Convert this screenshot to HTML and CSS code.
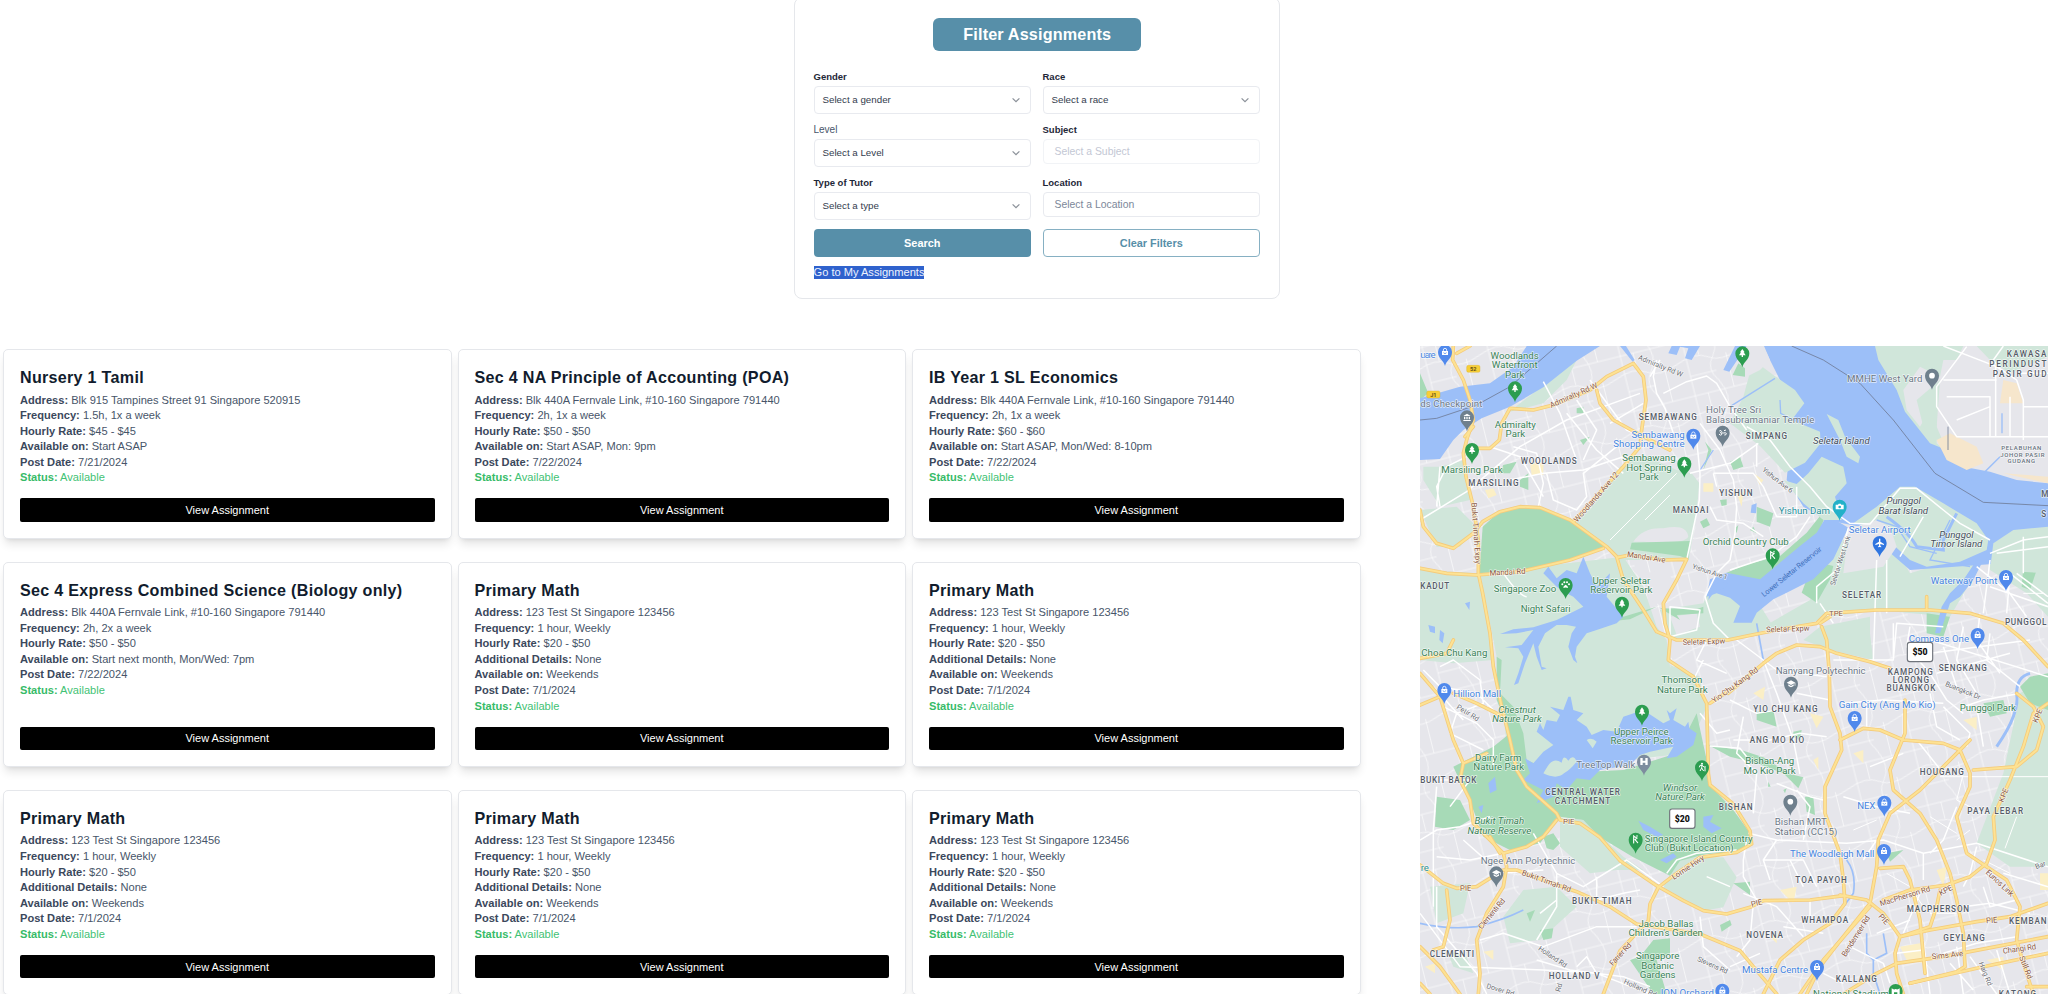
FILE: index.html
```html
<!DOCTYPE html>
<html lang="en">
<head>
<meta charset="utf-8">
<title>Assignments</title>
<link rel="stylesheet" href="styles.css">
</head>
<body>
<svg class="defs" width="0" height="0" aria-hidden="true"><symbol id="chev" viewBox="0 0 10 10"><path d="M1.6 3.3 5 6.7 8.4 3.3" fill="none" stroke="#8b9199" stroke-width="1.2"/></symbol></svg>
<section class="filter">
  <h1 class="filter-title">Filter Assignments</h1>
  <form class="fields">
    <div class="field"><label>Gender</label><div class="select"><span>Select a gender</span><svg class="chev"><use href="#chev"/></svg></div></div>
    <div class="field"><label>Race</label><div class="select"><span>Select a race</span><svg class="chev"><use href="#chev"/></svg></div></div>
    <div class="field"><label class="plain">Level</label><div class="select"><span>Select a Level</span><svg class="chev"><use href="#chev"/></svg></div></div>
    <div class="field"><label>Subject</label><div class="input disabled">Select a Subject</div></div>
    <div class="field"><label>Type of Tutor</label><div class="select"><span>Select a type</span><svg class="chev"><use href="#chev"/></svg></div></div>
    <div class="field"><label>Location</label><div class="input">Select a Location</div></div>
    <button type="button" class="btn">Search</button>
    <button type="button" class="btn outline">Clear Filters</button>
  </form>
  <a class="mine">Go to My Assignments</a>
</section>
<main class="content">
<div class="cards">
  <article class="card"><h2>Nursery 1 Tamil</h2><p><b>Address:</b> Blk 915 Tampines Street 91 Singapore 520915</p><p><b>Frequency:</b> 1.5h, 1x a week</p><p><b>Hourly Rate:</b> $45 - $45</p><p><b>Available on:</b> Start ASAP</p><p><b>Post Date:</b> 7/21/2024</p><p class="ok"><b>Status:</b> Available</p><button class="view">View Assignment</button></article>
  <article class="card"><h2>Sec 4 NA Principle of Accounting (POA)</h2><p><b>Address:</b> Blk 440A Fernvale Link, #10-160 Singapore 791440</p><p><b>Frequency:</b> 2h, 1x a week</p><p><b>Hourly Rate:</b> $50 - $50</p><p><b>Available on:</b> Start ASAP, Mon: 9pm</p><p><b>Post Date:</b> 7/22/2024</p><p class="ok"><b>Status:</b> Available</p><button class="view">View Assignment</button></article>
  <article class="card"><h2>IB Year 1 SL Economics</h2><p><b>Address:</b> Blk 440A Fernvale Link, #10-160 Singapore 791440</p><p><b>Frequency:</b> 2h, 1x a week</p><p><b>Hourly Rate:</b> $60 - $60</p><p><b>Available on:</b> Start ASAP, Mon/Wed: 8-10pm</p><p><b>Post Date:</b> 7/22/2024</p><p class="ok"><b>Status:</b> Available</p><button class="view">View Assignment</button></article>
  <article class="card"><h2>Sec 4 Express Combined Science (Biology only)</h2><p><b>Address:</b> Blk 440A Fernvale Link, #10-160 Singapore 791440</p><p><b>Frequency:</b> 2h, 2x a week</p><p><b>Hourly Rate:</b> $50 - $50</p><p><b>Available on:</b> Start next month, Mon/Wed: 7pm</p><p><b>Post Date:</b> 7/22/2024</p><p class="ok"><b>Status:</b> Available</p><button class="view">View Assignment</button></article>
  <article class="card"><h2>Primary Math</h2><p><b>Address:</b> 123 Test St Singapore 123456</p><p><b>Frequency:</b> 1 hour, Weekly</p><p><b>Hourly Rate:</b> $20 - $50</p><p><b>Additional Details:</b> None</p><p><b>Available on:</b> Weekends</p><p><b>Post Date:</b> 7/1/2024</p><p class="ok"><b>Status:</b> Available</p><button class="view">View Assignment</button></article>
  <article class="card"><h2>Primary Math</h2><p><b>Address:</b> 123 Test St Singapore 123456</p><p><b>Frequency:</b> 1 hour, Weekly</p><p><b>Hourly Rate:</b> $20 - $50</p><p><b>Additional Details:</b> None</p><p><b>Available on:</b> Weekends</p><p><b>Post Date:</b> 7/1/2024</p><p class="ok"><b>Status:</b> Available</p><button class="view">View Assignment</button></article>
  <article class="card"><h2>Primary Math</h2><p><b>Address:</b> 123 Test St Singapore 123456</p><p><b>Frequency:</b> 1 hour, Weekly</p><p><b>Hourly Rate:</b> $20 - $50</p><p><b>Additional Details:</b> None</p><p><b>Available on:</b> Weekends</p><p><b>Post Date:</b> 7/1/2024</p><p class="ok"><b>Status:</b> Available</p><button class="view">View Assignment</button></article>
  <article class="card"><h2>Primary Math</h2><p><b>Address:</b> 123 Test St Singapore 123456</p><p><b>Frequency:</b> 1 hour, Weekly</p><p><b>Hourly Rate:</b> $20 - $50</p><p><b>Additional Details:</b> None</p><p><b>Available on:</b> Weekends</p><p><b>Post Date:</b> 7/1/2024</p><p class="ok"><b>Status:</b> Available</p><button class="view">View Assignment</button></article>
  <article class="card"><h2>Primary Math</h2><p><b>Address:</b> 123 Test St Singapore 123456</p><p><b>Frequency:</b> 1 hour, Weekly</p><p><b>Hourly Rate:</b> $20 - $50</p><p><b>Additional Details:</b> None</p><p><b>Available on:</b> Weekends</p><p><b>Post Date:</b> 7/1/2024</p><p class="ok"><b>Status:</b> Available</p><button class="view">View Assignment</button></article>
</div>
<svg class="map" viewBox="30 18 1884 1944">
<defs>
  <pattern id="streets" width="190" height="170" patternUnits="userSpaceOnUse" patternTransform="rotate(-14)"><path d="M0 30H190M0 95Q60 70 95 95T190 95M30 0V170M110 0Q140 60 110 95T110 170M30 140H110M150 95V170M70 30V82M150 30V0" fill="none" stroke="#fff" stroke-width="2.6" opacity=".7"/></pattern>
  <path id="drop" d="M0 42C-3 26-21 20-21 0A21 21 0 1 1 21 0C21 20 3 26 0 42Z"/>
  <g id="tree"><use href="#drop" fill="#2c9d50"/><path d="M0-13-7-3H-4L-10 6H-2V11H2V6H10L4-3H7Z" fill="#fff"/></g>
  <g id="bag"><use href="#drop" fill="#5089ec"/><path d="M-9-3H9V9H-9Z" fill="#fff"/><path d="M-5-3V-6A5 5 0 0 1 5-6V-3" fill="none" stroke="#fff" stroke-width="2.4"/><path d="M-4 1A4 4 0 0 0 4 1" fill="none" stroke="#5089ec" stroke-width="2"/></g>
  <g id="dot"><use href="#drop" fill="#6f808d"/><circle r="8.5" fill="#fff"/></g>
  <g id="school"><use href="#drop" fill="#6f808d"/><path d="M-13-3 0-10 13-3 0 4ZM-8 2 0 7 8 2V7L0 11-8 7ZM11-3H13V6H11Z" fill="#fff"/></g>
  <g id="golf"><use href="#drop" fill="#2c9d50"/><path d="M-6-12V10M-6-10 4-5-2 0 6 9M4-12V-10" fill="none" stroke="#fff" stroke-width="3.4" stroke-linecap="round"/></g>
</defs>
<rect x="30" y="18" width="1884" height="1944" fill="#e6e6eb"/>
<rect x="30" y="18" width="1884" height="1944" fill="url(#streets)"/>

<g class="park">
  <path d="M490 550 630 380 700 345 800 390 845 400 868 430 860 520 836 660H620L590 620Z"/>
  <path d="M90 380 165 360 180 480 90 500 40 420V380ZM270 240 330 190 460 90 500 60 470 120 400 190 300 215ZM30 690 205 700 250 960 130 970 30 960ZM30 510 140 500 200 560 150 620 80 620Z"/>
  <path d="M210 700 640 650 700 740 740 860 770 900 780 980 880 1060 890 1100 830 1240 300 1300 260 950Z"/>
  <path d="M750 810 880 790 900 740 960 720 1040 780 1090 860 1000 895 860 895 780 895Z"/>
  <path d="M780 975 870 1010 880 1080 820 1080Z"/>
  <path d="M450 1432 520 1440 640 1550 700 1590 620 1590 540 1600 450 1520ZM340 1650 440 1640 500 1700 390 1800 300 1810 280 1730Z"/>
  <path d="M810 1552 940 1552 980 1612 940 1702 880 1712 760 1642Z"/>
  <path d="M60 1640 180 1630 160 1720 80 1750ZM110 1830 170 1850 190 1900 130 1880Z"/>
  <path d="M1060 860 1200 780 1240 660 1300 600 1420 560 1500 700 1700 640 1720 660 1620 830 1400 810 1260 830 1130 870Z"/>
  <path d="M1230 860 1380 830 1380 880 1390 960 1260 930 1180 900Z"/>
  <path d="M1720 600 1914 560V830L1850 760 1740 690Z"/>
  <path d="M1830 1060 1914 1010V1580H1800L1700 1510 1780 1300Z"/>
</g>
<path d="M670 605Q700 560 760 565 830 550 835 590 820 615 700 605ZM700 700 770 690 800 740 760 800 720 780ZM780 830 860 820 870 860 800 885Z" fill="#e6e6eb"/>
<g class="green">
  <path d="M208 700 218 560 260 522 320 503 390 503 480 540 590 620 480 660 330 690Z"/>
  <path d="M260 950 275 960 270 1060 310 1100 340 1180 350 1260 440 1300 640 1290 800 1240 860 1120 890 1260 897 1332 970 1410 1015 1472 1020 1512 970 1537 890 1542 810 1562 780 1607 670 1552 570 1492 520 1440 450 1430 390 1510 300 1530 220 1490 190 1410 130 1280 250 1220 300 1180 260 1080Z"/>
  <path d="M80 1370 150 1380 180 1440 130 1470 75 1460ZM30 100 55 160 30 180ZM665 608 840 603 835 658 810 648 660 628Z"/>
  <path d="M730 1800 780 1795 780 1840 740 1860 770 1962H730L660 1860 690 1850Z"/>
  <path d="M400 1490 430 1480 450 1510 430 1530 410 1525ZM390 1770 430 1765 425 1795 400 1800ZM350 1720 375 1710 360 1745ZM330 420 355 400 355 450 330 440ZM280 375 320 365 300 400 270 400ZM510 300 540 290 520 315ZM500 205 520 200 520 220 500 220Z"/>
  <path d="M1040 500 1090 520 1080 560 1040 545ZM960 365 990 350 1000 380 970 390ZM885 305 905 330 880 390 895 330ZM930 480 950 478 950 495 935 498ZM870 545 890 535 900 555 880 565ZM985 555 980 580 975 565ZM1030 560 1040 580 1020 570Z"/>
  <path d="M950 698 1010 673 1110 648 1190 578 1230 528 1250 518 1210 618 1130 698 1050 728Z"/>
  <path d="M1190 718 1230 668 1270 678 1260 718 1220 788 1175 758Z"/>
  <path d="M1040 1115 1090 1110 1100 1160 1040 1140ZM1150 1175 1175 1170 1170 1200 1150 1190ZM1550 820 1620 830 1600 890 1550 880ZM1840 680 1880 690 1860 750 1835 740ZM1860 1010 1914 1000V1110L1860 1090 1830 1040ZM1430 1540 1480 1530 1440 1565ZM970 1630 1020 1625 1020 1665ZM1720 1090 1780 1080 1790 1120 1740 1130Z"/>
  <path d="M895 1215 1000 1232 1060 1252 1140 1302 1180 1312 1165 1345 1120 1300 1040 1270 960 1250ZM1185 1370 1210 1370 1215 1425 1190 1415ZM930 1755 960 1740 965 1755 935 1775ZM1120 1350 1130 1345 1125 1360ZM1075 1325 1082 1340 1074 1340Z"/>
  <path d="M750 805 860 808 880 800V820L800 825 810 840ZM590 845 740 800 660 838Z"/>
</g>
<g class="water">
  <path d="M30 175 150 140 240 130 310 80 350 18H570L500 62 400 142 300 200 215 235 160 270 130 300 90 357 30 360ZM630 18 668 65 674 60 648 18ZM785 18 775 40 800 45 810 20 835 25 825 55 845 60 870 18ZM940 90 975 18H1010L958 95Z"/>
  <path d="M1060 18H1914V660L1500 690 1350 560 1250 540 1180 500 1130 420 1150 200 1080 60Z"/>
  <path d="M1290 548 1315 563 1270 658 1210 718 1130 758 1090 778 1040 818 1025 848 970 848 990 798 960 773 920 760 890 770 900 718 950 698 1050 718 1170 618 1220 578 1250 528Z"/>
  <path d="M400 700 415 680 440 715 470 690 500 700 520 650 540 700 560 740 600 700 590 770 640 830 620 850 560 870 530 880 500 920 495 950 502 970 490 960 475 920 485 880 498 860 470 855 440 855 405 880 385 920 395 980 410 985 395 990 380 950 370 910 345 970 325 1030 312 1035 325 1000 340 950 325 925 285 922 335 915 370 870 320 880 270 882 310 868 370 862 440 840 520 800 490 770 470 760 440 740Z"/>
  <path d="M340 1320 360 1300 345 1255 370 1270 400 1235 430 1215 380 1175 390 1150 400 1170 410 1140 440 1145 450 1125 420 1100 460 1110 475 1070 482 1070 490 1110 520 1120 500 1140 530 1160 545 1185 580 1170 620 1175 640 1130 700 1110 760 1150 780 1140 770 1110 780 1120 800 1105 790 1140 825 1160 835 1145 838 1165 860 1180 850 1215 800 1250 770 1255 790 1220 720 1235 690 1245 660 1275 570 1290 540 1320 500 1315 470 1350 440 1330 430 1370 380 1390 400 1350Z"/>
  <path d="M685 1442 720 1460 760 1485 740 1490 700 1470ZM880 1430 910 1425 900 1445 935 1465 905 1480 880 1460ZM750 1560 790 1540 800 1550 770 1570Z"/>
  <path d="M1720 660 1690 720 1650 770 1620 790 1590 880 1575 880 1595 800 1620 760 1660 720 1700 660Z"/>
  <path d="M55 855 75 860 75 880 60 875ZM90 870 103 880 98 910 88 900ZM165 790 180 785 178 810ZM900 740 920 730 955 725 950 740 910 760 895 780ZM235 1330 255 1310 260 1350 240 1360ZM205 1400 220 1395 215 1420ZM1480 18 1500 18 1490 40ZM1025 495 1040 490 1038 520 1022 518Z"/>
</g>
<g class="park">
  <path d="M412 1280Q430 1250 455 1268 460 1240 475 1262 490 1240 500 1265 480 1290 462 1300 440 1320 400 1300ZM530 1200Q545 1190 560 1205L548 1225Z"/>
  <path d="M1000 170 1030 60 1090 105 1155 150 1183 190 1145 240 1230 275 1232 310 1185 368 1125 398 1050 318 960 250Z"/>
  <path d="M1250 222 1285 240 1305 290 1350 350 1345 370 1310 350 1290 300Z"/>
  <path d="M1120 420 1160 432 1195 400 1235 350 1300 380 1310 430 1275 470 1295 540 1240 540 1180 490Z"/>
  <path d="M1395 18H1700V240L1660 370 1610 330 1560 310 1485 215 1460 150 1405 60Z"/>
  <path d="M1330 550 1400 500 1470 440 1515 440 1600 490 1700 550 1735 600 1730 630 1650 665 1550 680 1500 660 1390 560Z"/>
  <path d="M1914 560 1810 570 1750 610 1740 690 1914 700Z"/>
</g>
<path d="M1010 18H1062L1080 60 1050 90 1010 110Z" fill="#e6e6eb"/>
<path d="M1480 150 1530 80 1590 110 1600 60 1640 60 1660 18H1914V430L1820 420 1740 395 1660 380 1580 310 1580 170 1530 260 1490 210Z" fill="#e6e6eb"/>
<path class="park" d="M1590 120 1580 260 1610 330 1540 260 1520 180ZM1700 18H1914V50L1800 100 1740 60Z"/>
<path d="M1580 300 1620 280 1700 320 1720 370 1670 390 1610 360ZM1780 120 1820 130 1840 190 1770 190ZM1780 400 1914 410V430Z" fill="#f6e6cc"/>
<path d="M1340 560 1400 540 1440 560 1460 620 1420 680 1300 700 1310 620Z" fill="#e6e6eb"/>
<path class="green" d="M968 105 985 70 1005 85 1005 110Z"/>
<g fill="none" stroke="#9cbff8" stroke-width="8"><path d="M1400 540 1460 560 1500 620 1580 640M1620 540 1560 660 1680 680M1660 430 1720 400 1770 350M960 200 1095 115M1110 180 1112 220 1150 240M1776 220V280M870 390 910 330" stroke-width="4"/><path d="M1430 530Q1500 580 1520 620L1600 630 1600 600 1640 520M1860 1000Q1820 1010 1820 1060 1830 1120 1760 1220" stroke-width="9"/><path d="M1310 1560Q1340 1600 1330 1660L1300 1700M1370 1780V1840L1390 1860 1430 1840 1420 1780M1390 1860V1900L1410 1962M30 1750Q120 1770 200 1760 280 1740 340 1710M1040 850 1060 960" stroke-width="5"/></g>
<g fill="#fbefc6"><path d="M360 370H400V405H365ZM225 450 250 445 260 465 235 475ZM880 430H910V455H880ZM1030 400 1060 420 1050 435ZM980 460 1000 455 995 500ZM1030 1060 1065 1040 1060 1080ZM1200 1120 1240 1130 1220 1165ZM1330 1240 1360 1230V1270ZM1580 1590 1610 1580 1600 1640ZM1110 1650 1160 1640 1150 1690ZM1470 1820 1530 1810 1540 1870 1490 1860ZM1890 1600H1914V1650H1890ZM1660 1140 1700 1130V1170ZM220 1835 250 1830V1860ZM45 1880 75 1870V1900ZM1210 1260 1225 1250V1290ZM1730 1860 1780 1850V1890ZM1080 1790 1100 1780V1810Z"/></g>

<g class="street">
  <path d="M30 540 170 455 330 320 470 240 690 160M400 125 450 220 500 360M300 420 400 400 520 390 640 350M385 500 400 430 380 340 310 320M520 360 560 270 500 180M600 250 700 190M540 120 650 270 720 300M470 220 560 330 640 400M410 400 430 480 500 510 530 470 520 400 620 320M240 320 330 350 400 470M90 500 80 440 110 380 170 350M740 60 730 110 740 160 765 205 790 280M760 160 830 125 890 108 920 130 960 200 1010 270M860 300 870 400 868 480 830 660M840 400 960 370 1045 310M720 110 750 60M90 380 80 500"/>
  <path d="M870 250 930 330 970 420 980 500 975 580 960 660 920 700 885 770 910 850 960 900M1010 260 1080 300 1140 380 1200 440 1250 500 1320 550 1380 552 1470 445 1520 445 1600 510 1650 550 1740 600M960 690 1080 650 1160 590 1200 530M1315 563 1300 620 1280 690 1220 740 1220 790M910 400 960 400 1030 400 1060 440 1100 530 1160 530V440M910 400 920 440M900 500 920 540 1000 550 1060 590M1040 310 1040 380"/>
  <path d="M1670 20 1580 140V200L1640 290H1914M1600 18 1760 80 1820 120 1840 180V300M1600 120H1760M1610 170H1740V290M1757 80V290M1640 240 1740 200M1800 170V290M1820 100H1914M1840 200H1914M1780 18 1750 60 1780 100M1540 530 1470 650M1740 640 1840 600 1914 590M1760 640 1914 620M1840 590V700"/>
  <path d="M280 700Q330 770 350 770M780 800 870 810 860 870 780 890ZM890 900 860 960 950 1000M90 980 130 960 210 1020 220 1090 140 1120M40 990 90 1040 200 1060 250 1110M100 1100 200 1150 250 1200V1280M140 1120 120 1180 220 1230M70 1040 160 1140M880 960 850 1020M900 1218 990 1225 1010 1250M870 1120 920 1180 960 1170M30 1500 80 1470 150 1460 240 1430M80 1340 70 1470V1700M80 1550 180 1560 280 1540M160 1500 250 1580M370 1480 440 1600 440 1700 380 1800M440 1600 520 1640 650 1560 760 1640M560 1610 560 1680 640 1660 690 1650M770 1600 800 1560 860 1540 980 1530M30 1720 150 1880 400 1890 560 1900 720 1962M210 1800 280 1780 400 1820 560 1760 680 1760M380 1860 480 1890 640 1910 720 1940M560 1900 530 1850 500 1880M80 1640V1760L200 1900 230 1962M260 1600 400 1590M440 1680 390 1720M870 1730 880 1820 960 1890M120 1400 180 1320 90 1320"/>
  <path d="M1230 790 1270 850M1270 960 1390 960 1400 660M1430 660 1430 820M1380 960 1450 960 1460 850 1600 860M1450 850V960M1500 860 1490 920 1560 1000 1610 1080 1660 1120M1560 900 1914 1010M1600 920 1640 1040M1660 860 1640 960 1700 1060M1710 820 1700 900 1770 1000M1740 880 1730 960 1830 1040M1560 940 1860 900M1580 1000 1800 940M1720 820 1740 660M1790 820 1800 700 1914 790M1740 740 1914 800M1700 680 1800 760M1770 720 1850 830M1820 700 1914 770M1060 960 1100 1060 1150 1200 1170 1302M980 900 1100 990 1250 1010M960 1080 1040 1120 1100 1110M970 1200 1080 1200 1170 1180 1250 1190M1000 1130 980 1240 1040 1300M1300 1090 1420 1080 1600 1090M1370 1090V1160M1560 1060 1580 1160 1650 1200M1480 1120V1190M1660 1100 1720 1080 1820 1062M1700 1100 1720 1220M1520 1200 1600 1300M1600 1100 1680 1180 1670 1220M1380 1280 1480 1240M1260 1080 1160 1060"/>
  <path d="M1015 1480 1100 1500 1310 1510 1420 1500 1540 1540 1700 1510 1914 1580M1180 1500 1200 1400 1160 1350M1010 1500 1000 1560 1000 1610 1040 1680M1100 1500 1060 1560 1080 1620M1220 1640 1180 1560 1100 1560M1360 1560 1400 1500M1500 1420 1400 1400 1300 1370M1640 1400 1600 1500 1560 1540M1540 1540V1620M1700 1520 1680 1600 1660 1640M1720 1640 1740 1700 1820 1680M1060 1560 1140 1560 1180 1640M1030 1690 1020 1800 980 1850M1000 1660 1100 1700 1180 1790M1120 1760 1240 1780M1050 1840 960 1880M1600 1840 1700 1810 1820 1790M1620 1870 1690 1950M1680 1850 1760 1962M1760 1830 1800 1962M1460 1840 1540 1830M1500 1740 1400 1780M1530 1660 1480 1780M1660 1700 1740 1690 1860 1720M1780 1600 1914 1640M1540 1800 1560 1962M1640 1820 1660 1962M1200 1680V1740M1240 1900 1300 1930M1320 1820 1420 1870 1440 1930M1100 1330 1200 1370 1240 1380M1040 1300 1030 1420M890 1610 960 1640"/>
</g>
<g fill="none" stroke="#fff" stroke-width="3"><path d="M600 600 800 400M705 540 780 465M1590 1310H1914M1840 760H1900M1660 1300 1640 1380 1720 1420M1680 1470 1640 1500M1560 1430 1640 1480M1400 1440 1330 1470M1430 1600 1500 1640M1560 1720H1640M1500 1640 1540 1700M1720 1560 1800 1600M1785 1525 1820 1430"/></g>

<g class="case"><g id="hw">
  <path d="M130 18 128 60 160 120 180 180 190 240 170 300 160 340 168 410 190 500 205 600 205 700 218 760 240 880 250 980 275 1100 300 1200 320 1290 350 1340 440 1420 450 1440 510 1450 570 1492 630 1562 740 1637 820 1682 880 1712 950 1722 1020 1702 1060 1682 1200 1680 1300 1667"/>
  <path d="M190 260 165 290M180 18 140 40"/>
  <path d="M200 325 240 325 268 300 275 250 300 205 370 210 430 195 540 150 590 110 670 70 700 110 708 180 695 270 690 320 640 380 490 545M560 150 570 190 610 240 700 290 780 330"/>
  <path d="M30 510 40 560 80 610 130 625 190 580 218 545 270 515 330 500 390 503 480 540 590 620 620 650 640 720 700 810 740 875 800 900 954 900 1000 890 1100 870 1220 850 1250 820 1400 810 1560 810 1680 820 1780 850 1840 900 1914 980"/>
  <path d="M30 685 110 700 200 705 330 695 480 660 580 625M625 652 660 645 760 660 830 658 800 720 760 790 765 850 780 900 775 960 850 1010 890 1090 895 1300 900 1335 970 1392 1020 1472 1025 1512 980 1537 870 1552 790 1607 745 1642 720 1692 715 1742 630 1832 580 1962M900 1090 960 1050"/>
  <path d="M30 1000 90 1070 130 1200 160 1270 150 1320 180 1380 190 1450 230 1490 280 1540 290 1580 280 1640 230 1720 200 1800 210 1900 205 1962M30 955 110 940 130 900M30 1095 90 1070M130 1060 200 1090 270 1125M160 1270 230 1240"/>
  <path d="M30 1575 100 1630 140 1645 200 1640 280 1590 320 1590 400 1620 500 1655 600 1700 680 1752 870 1782 990 1832 1040 1892 1100 1962M110 1650 120 1740 100 1820 70 1830M30 1820 90 1880 150 1962M30 1930 60 1962M440 1440 400 1490 350 1520 280 1540M240 1490 270 1540"/>
  <path d="M954 1060 1060 970 1100 940 1160 915 1230 920 1280 940 1380 965 1440 985M1235 860 1250 900 1258 1000 1260 1100 1290 1180 1295 1230 1245 1340 1245 1420 1290 1540 1300 1620 1305 1690 1260 1750 1180 1800 1110 1860 1060 1962M1550 770V810M1260 830 1230 850"/>
  <path d="M1290 1200 1360 1165 1410 1170 1480 1200 1600 1210 1650 1230 1680 1300 1680 1340 1640 1430 1670 1540 1730 1580M1485 1080V1180L1440 1290 1450 1350 1530 1420 1580 1500 1620 1600 1640 1680 1660 1780 1665 1880 1640 1895 1500 1930M1680 1200 1640 1240 1530 1350 1440 1420 1405 1500 1400 1580 1380 1690 1300 1790 1230 1880 1190 1962M1410 1585 1480 1580 1500 1620 1530 1740 1545 1900"/>
  <path d="M1914 1090 1870 1120 1840 1220 1800 1320 1750 1430 1755 1500 1730 1570 1680 1610 1610 1635 1500 1650 1420 1680M1820 1060 1870 1100 1900 1160 1880 1230 1820 1280 1690 1290M1730 1580 1790 1620 1830 1700 1820 1800 1840 1870 1870 1962"/>
  <path d="M1290 1665 1370 1680 1420 1720 1470 1790 1560 1770 1700 1745 1800 1730 1914 1690M1470 1790 1455 1840 1460 1900 1480 1962M1470 1790 1560 1760 1580 1700 1590 1650M1300 1962 1400 1900 1460 1870 1600 1850 1914 1790M1500 1930 1720 1880 1914 1840M1380 1700 1240 1860 1170 1962M1850 1940H1914"/>
</g></g>
<use href="#hw" class="core"/>
<g fill="none" stroke="#6d7893" stroke-width="2.4"><path d="M30 240 80 235 200 195 300 140 440 18M1145 18 1240 60 1350 130 1450 240 1575 400 1720 487 1914 497M1614 260V330"/></g>

<g class="labels">
<g>
  <text x="31" y="55" class="blue" textLength="46">uare</text><text x="314" y="57" class="gr m">Woodlands</text><text x="314" y="85" class="gr m">Waterfront</text><text x="314" y="113" class="gr m">Park</text>
  <text x="31" y="202" class="gy" textLength="186">ds Checkpoint</text><text x="316" y="264" class="gr m">Admiralty</text><text x="316" y="291" class="gr m">Park</text>
  <text x="94" y="400" class="gr" textLength="184">Marsiling Park</text><text x="175" y="437" class="ds" textLength="153">MARSILING</text><text x="332" y="372" class="ds" textLength="171">WOODLANDS</text>
  <text x="686" y="239" class="ds" textLength="177">SEMBAWANG</text><text x="824" y="293" class="blue e">Sembawang</text><text x="824" y="322" class="blue e" textLength="214">Shopping Centre</text>
  <text x="717" y="363" class="gr m">Sembawang</text><text x="717" y="392" class="gr m">Hot Spring</text><text x="717" y="420" class="gr m">Park</text><text x="788" y="520" class="ds" textLength="110">MANDAI</text>
  <text x="888" y="220" class="gy" textLength="165">Holy Tree Sri</text><text x="888" y="249" class="gy" textLength="325">Balasubramaniar Temple</text><text x="928" y="468" class="ds" textLength="102">YISHUN</text>
  <text class="rd" transform="translate(424 204) rotate(-24)" textLength="154">Admiralty Rd W</text><text class="rd" transform="translate(502 548) rotate(-49)" textLength="190">Woodlands Ave 12</text><text class="rd" transform="translate(184 488) rotate(86)" textLength="185">Bukit Timah Expy</text><text class="rg" transform="translate(683 58) rotate(22)" textLength="142">Admiralty Rd W</text>
  <text class="rd" transform="translate(650 650) rotate(9)" textLength="117">Mandai Ave</text><text x="878" y="615" class="gr" textLength="258">Orchid Country Club</text><text class="rg" transform="translate(1055 392) rotate(38)" textLength="110">Yishun Ave 6</text>
</g>
<g transform="translate(954 0)">
  <text x="357" y="127" class="gy" textLength="226">MMHE West Yard</text><text x="836" y="52" class="ds" textLength="122">KAWASA</text><text x="784" y="81" class="ds" textLength="174">PERINDUST</text><text x="794" y="110" class="ds" textLength="164">PASIR GUD</text>
  <text x="53" y="297" class="ds" textLength="127">SIMPANG</text><text x="255" y="312" class="is" textLength="170">Seletar Island</text><text x="527" y="492" class="is m">Punggol</text><text x="526" y="521" class="is m">Barat Island</text><text x="685" y="593" class="is m">Punggol</text><text x="685" y="622" class="is m">Timor Island</text>
  <text x="881" y="331" class="sm m">PELABUHAN</text><text x="884" y="350" class="sm m">JOHOR PASIR</text><text x="881" y="369" class="sm m">GUDANG</text>
  <text x="152" y="521" class="teal" textLength="154">Yishun Dam</text><text x="362" y="579" class="blue" textLength="186">Seletar Airport</text><text x="940" y="470" class="ds">M</text><text x="940" y="530" class="ds">S</text>
  <text class="bw" transform="translate(108 772) rotate(-39)" textLength="225">Lower Seletar Reservoir</text><text class="rg" transform="translate(320 738) rotate(-72)" textLength="155">Seletar West Link</text>
</g>
<g transform="translate(0 660)">
  <text class="rd" transform="translate(239 47) rotate(-3)" textLength="108">Mandai Rd</text><text x="31" y="86" class="ds" textLength="89">KADUT</text><text x="251" y="95" class="gr" textLength="188">Singapore Zoo</text><text x="332" y="156" class="gr" textLength="150">Night Safari</text>
  <text x="634" y="71" class="gr m">Upper Seletar</text><text x="634" y="100" class="gr m">Reservoir Park</text><text class="rg" transform="translate(845 25) rotate(18)" textLength="110">Yishun Ave 1</text><text class="rd" transform="translate(818 255) rotate(-2)" textLength="128">Seletar Expw</text>
  <text x="34" y="289" class="gr" textLength="198">Choa Chu Kang</text><text x="130" y="410" class="blue" textLength="143">Hillion Mall</text><text class="rg" transform="translate(138 445) rotate(32)" textLength="75">Petir Rd</text>
  <text x="321" y="458" class="gr it m">Chestnut</text><text x="321" y="486" class="gr it m">Nature Park</text><text x="816" y="370" class="gr m">Thomson</text><text x="817" y="399" class="gr m">Nature Park</text><text x="694" y="524" class="gr m">Upper Peirce</text><text x="695" y="553" class="gr m">Reservoir Park</text>
  <text x="499" y="624" class="gy" textLength="177">TreeTop Walk</text><text x="265" y="603" class="gr m">Dairy Farm</text><text x="266" y="631" class="gr m">Nature Park</text><text class="rd" transform="translate(913 430) rotate(-36)" textLength="165">Yio Chu Kang Rd</text>
</g>
<g transform="translate(954 660)">
  <text x="342" y="114" class="ds" textLength="120">SELETAR</text><text x="303" y="167" class="rd">TPE</text><text class="rd" transform="translate(115 217) rotate(-2)" textLength="130">Seletar Expw</text><text x="608" y="71" class="blue" textLength="200">Waterway Point</text><text x="831" y="195" class="ds" textLength="127">PUNGGOL</text>
  <text x="542" y="246" class="blue" textLength="181">Compass One</text><text x="632" y="334" class="ds" textLength="147">SENGKANG</text><text x="548" y="345" class="ds m">KAMPONG</text><text x="550" y="370" class="ds m">LORONG</text><text x="550" y="394" class="ds m">BUANGKOK</text>
  <text x="143" y="341" class="gy" textLength="270">Nanyang Polytechnic</text><text x="76" y="456" class="ds" textLength="195">YIO CHU KANG</text><text x="332" y="443" class="blue" textLength="291">Gain City (Ang Mo Kio)</text>
  <text class="rg" transform="translate(650 377) rotate(22)" textLength="112">Buangkok Dr</text><text x="695" y="453" class="gr" textLength="169">Punggol Park</text><text x="65" y="550" class="ds" textLength="166">ANG MO KIO</text><text x="125" y="612" class="gr m">Bishan-Ang</text><text x="125" y="641" class="gr m">Mo Kio Park</text><text x="575" y="646" class="ds" textLength="135">HOUGANG</text><text class="rd" transform="translate(928 490) rotate(-68)">KPE</text>
</g>
<g transform="translate(0 1302)">
  <text x="31" y="28" class="ds" textLength="171">BUKIT BATOK</text><text x="519" y="64" class="ds m">CENTRAL WATER</text><text x="519" y="89" class="ds m">CATCHMENT</text><text x="810" y="50" class="gr it m">Windsor</text><text x="810" y="79" class="gr it m">Nature Park</text><text x="926" y="108" class="ds" textLength="104">BISHAN</text>
  <text x="268" y="151" class="gr it m">Bukit Timah</text><text x="268" y="180" class="gr it m">Nature Reserve</text><text x="459" y="149" class="rd">PIE</text><text x="704" y="203" class="gr" textLength="324">Singapore Island Country</text><text x="704" y="231" class="gr" textLength="267">Club (Bukit Location)</text>
  <text x="32" y="292" class="teal">re</text><text x="212" y="269" class="gy" textLength="284">Ngee Ann Polytechnic</text><text class="rd" transform="translate(150 351) rotate(-2)">PIE</text><text class="rd" transform="translate(334 302) rotate(20)" textLength="155">Bukit Timah Rd</text><text class="rd" transform="translate(792 318) rotate(-34)" textLength="112">Lornie Hwy</text><text x="486" y="389" class="ds" textLength="181">BUKIT TIMAH</text>
  <text class="rd" transform="translate(215 467) rotate(-50)" textLength="112">Clementi Rd</text><text x="59" y="549" class="ds" textLength="136">CLEMENTI</text><text class="rg" transform="translate(383 527) rotate(34)" textLength="98">Holland Rd</text><text x="768" y="459" class="gr m">Jacob Ballas</text><text x="767" y="487" class="gr m">Children's Garden</text>
  <text x="743" y="556" class="gr m">Singapore</text><text x="743" y="585" class="gr m">Botanic</text><text x="743" y="613" class="gr m">Gardens</text><text class="rd" transform="translate(608 577) rotate(-47)" textLength="85">Farrer Rd</text><text x="416" y="614" class="ds" textLength="155">HOLLAND V</text><text class="rg" transform="translate(228 642) rotate(17)">Dover Rd</text><text class="rg" transform="translate(640 628) rotate(24)">Holland Rd</text><text class="rg" transform="translate(860 560) rotate(24)" textLength="98">Stevens Rd</text><text class="rg" transform="translate(450 655) rotate(-75)">Rd</text><text x="752" y="667" class="blue" textLength="160">ION Orchard</text>
</g>
<g transform="translate(954 1302)">
  <text x="388" y="105" class="blue" textLength="54">NEX</text><text x="140" y="153" class="gy" textLength="156">Bishan MRT</text><text x="140" y="182" class="gy" textLength="188">Station (CC15)</text><text x="186" y="250" class="blue" textLength="253">The Woodleigh Mall</text><text x="718" y="120" class="ds" textLength="170">PAYA LEBAR</text><text class="rd" transform="translate(826 86) rotate(-68)">KPE</text>
  <text x="202" y="328" class="ds" textLength="157">TOA PAYOH</text><text class="rd" transform="translate(71 399) rotate(-14)">PIE</text><text class="rd" transform="translate(458 397) rotate(-17)" textLength="157">MacPherson Rd</text><text class="rd" transform="translate(638 366) rotate(-28)">KPE</text><text x="536" y="413" class="ds" textLength="190">MACPHERSON</text><text x="220" y="446" class="ds" textLength="143">WHAMPOA</text><text x="55" y="492" class="ds" textLength="112">NOVENA</text>
  <text class="rd" transform="translate(353 550) rotate(-58)" textLength="140">Bendemeer Rd</text><text class="rd" transform="translate(450 428) rotate(48)">PIE</text><text class="rd" transform="translate(775 448) rotate(-5)">PIE</text><text x="843" y="450" class="ds" textLength="115">KEMBAN</text><text x="646" y="500" class="ds" textLength="127">GEYLANG</text><text class="rd" transform="translate(612 556) rotate(-6)" textLength="95">Sims Ave</text><text class="rd" transform="translate(826 539) rotate(-8)" textLength="100">Changi Rd</text><text class="rd" transform="translate(772 297) rotate(43)" textLength="105">Eunos Link</text><text class="rd" transform="translate(873 550) rotate(68)">Still Rd</text><text class="rg" transform="translate(752 567) rotate(68)">Haig Rd</text><text class="rg" transform="translate(925 286) rotate(-22)">Bar</text>
  <text x="42" y="598" class="blue" textLength="198">Mustafa Centre</text><text x="323" y="623" class="ds" textLength="126">KALLANG</text><text x="255" y="668" class="gr" textLength="228">National Stadium</text><text x="812" y="670" class="ds" textLength="115">KATONG</text>
</g>
</g>
<g>
  <g fill="#f7cf38" stroke="#d9a920"><rect x="170" y="76" width="40" height="21" rx="5"/><rect x="50" y="153" width="40" height="21" rx="5"/></g><text x="190" y="94" class="tag">52</text><text x="70" y="171" class="tag">J1</text>
  <use href="#bag" x="105" y="36"/><use href="#tree" x="315" y="145"/><use href="#tree" x="186" y="330"/><use href="#tree" x="823" y="371"/><use href="#bag" x="850" y="287"/>
  <g transform="translate(171 232)"><use href="#drop" fill="#6f808d"/><path d="M-11-4 0-11 11-4ZM-9-2H-5V6H-9ZM-2-2H2V6H-2ZM5-2H9V6H5ZM-11 8H11V11H-11Z" fill="#fff"/></g>
  <g transform="translate(938 278)"><use href="#drop" fill="#6f808d"/><path d="M-10-5Q-4-9-3-3-4 0-7 0-2 1-3 6-7 10-11 4M-3 1H3Q9-1 11 2 11 8 5 7M4-6 10-8" fill="none" stroke="#fff" stroke-width="3"/></g>
  <use href="#tree" x="997" y="40"/><use href="#dot" x="1566" y="107"/>
  <g transform="translate(1289 500)"><use href="#drop" fill="#22b1c8"/><path d="M-12-6H-5L-3-9H3L5-6H12V8H-12Z" fill="#fff"/><circle cy="1" r="4" fill="#22b1c8"/></g>
  <g transform="translate(1409 609)"><use href="#drop" fill="#2f75e0"/><path d="M-2-13H2V-4L13 3V6L2 3V8L5 11V13L0 12-5 13V11L-2 8V3L-13 6V3L-2-4Z" fill="#fff"/></g>
  <use href="#golf" x="1088" y="646"/>
  <g transform="translate(467 735)"><use href="#drop" fill="#2c9d50"/><path d="M0-1Q8 3 7 9 0 6-7 9-8 3 0-1Z" fill="#fff"/><g fill="#fff"><circle cx="-10" cy="-2" r="3"/><circle cx="-4" cy="-8" r="3"/><circle cx="4" cy="-8" r="3"/><circle cx="10" cy="-2" r="3"/></g></g>
  <use href="#tree" x="636" y="791"/><use href="#tree" x="696" y="1115"/><use href="#bag" x="103" y="1050"/>
  <g transform="translate(702 1265)"><use href="#drop" fill="#7d8c9e"/><path d="M-11-11H-4V-3H4V-11H11V10H4V3H-4V10H-11Z" fill="#fff"/></g>
  <g transform="translate(876 1282)"><use href="#drop" fill="#2c9d50"/><circle cy="-11" r="3" fill="#fff"/><path d="M0-7-1 2-6 11M-1 2 5 11M-8 0-6-6 0-6 7 0M9-4V12" fill="none" stroke="#fff" stroke-width="3"/></g>
  <use href="#bag" x="1788" y="711"/><use href="#bag" x="1703" y="885"/><use href="#school" x="1143" y="1031"/><use href="#bag" x="1334" y="1134"/>
  <use href="#golf" x="677" y="1499"/><use href="#school" x="259" y="1600"/><use href="#dot" x="1141" y="1385"/><use href="#bag" x="1423" y="1388"/><use href="#bag" x="1422" y="1533"/><use href="#bag" x="1221" y="1881"/><use href="#bag" x="937" y="1952"/>
  <g transform="translate(1457 1953)"><use href="#drop" fill="#2c9d50"/><path d="M-12-8Q-6-3 0-6 6-3 12-8V10H5V4H-5V10H-12Z" fill="#fff"/></g>
  <g class="price"><rect x="1492" y="907" width="76" height="58" rx="7"/><text x="1530" y="944">$50</text><rect x="779" y="1407" width="76" height="58" rx="7"/><text x="817" y="1445">$20</text></g>
</g>
</svg>
</main>
</body>
</html>
```
FILE: styles.css
```css
* { box-sizing: border-box; }
html, body { margin: 0; height: 994px; overflow: hidden; background: #fff; }
body { font-family: "Liberation Sans", Arial, sans-serif; font-size: 11.1px; color: #475569; }
.defs { display: block; height: 0; }
h1, h2, p { margin: 0; }
button { font-family: inherit; margin: 0; }

.filter {
  width: 486px; height: 302px; margin: -3px 0 0 794px; padding: 20px 18px 0 18.5px;
  border: 1px solid #e5e7eb; border-radius: 8px;
}
.filter-title {
  width: 208px; height: 33px; margin: 0 auto; border-radius: 6px; background: #578fa9;
  color: #fff; font-size: 16.2px; line-height: 33px; letter-spacing: .15px; text-align: center;
}
.fields { display: grid; grid-template-columns: 217.5px 217.5px; column-gap: 11.5px; row-gap: 9.5px; margin-top: 19px; }
.field { height: 43.5px; }
.field label { display: block; height: 16px; font-size: 9.5px; line-height: 14px; font-weight: bold; color: #1e2738; }
.field label.plain { font-weight: normal; color: #475569; font-size: 10px; }
.select, .input {
  display: flex; align-items: center; justify-content: space-between; height: 27.5px;
  padding: 0 9px 0 8px; border: 1px solid #e8eaef; border-radius: 4px; font-size: 9.75px; color: #333c4d;
}
.input { height: 24.5px; padding-left: 11px; font-size: 10.4px; color: #7c8799; }
.input.disabled { color: #c3c7d4; border-color: #f1f3f6; }
.chev { width: 10px; height: 10px; }
.btn { height: 27.5px; padding: 0; border: 0; border-radius: 4px; background: #578fa9; color: #fff; font-size: 10.9px; font-weight: bold; }
.btn.outline { background: #fff; border: 1px solid #86b0c3; color: #578fa9; }
.mine { display: inline-block; margin-top: 9.5px; height: 12.5px; line-height: 12.5px; background: #2f62cd; color: #eef3ff; }

.content { display: flex; align-items: flex-start; margin-top: 47px; }
.cards {
  display: grid; grid-template-columns: repeat(3, 448.5px); column-gap: 6px; row-gap: 23px;
  width: 1358px; margin: 3.3px 59px 0 3px; flex: none;
}
.card {
  display: flex; flex-direction: column; padding: 16.6px 16px 16px; border: 1px solid #e5e7eb; border-radius: 5px;
  background: #fff; box-shadow: 0 7px 10px -2px rgba(0,0,0,.11), 0 3px 4px -3px rgba(0,0,0,.1);
}
.card h2 { height: 21.7px; line-height: 21.7px; margin-bottom: 4px; font-size: 16.1px; letter-spacing: .29px; color: #111c2d; white-space: nowrap; }
.card p { height: 15.55px; line-height: 15.55px; white-space: nowrap; }
.card .ok { color: #42c274; }
.card p b { color: #3b485c; }
.card .ok b { color: #37bb68; }
.view { height: 23.5px; margin-top: auto; padding: 0; border: 0; border-radius: 2px; background: #000; color: #fff; font-size: 11px; flex: none; }
.card p.ok { margin-bottom: 12.6px; }

.map { display: block; flex: none; width: 628px; height: 648px; overflow: hidden; }
.park { fill: #d0e6da; }
.green { fill: #a7dab7; }
.water { fill: #9cbff8; }
.street { fill: none; stroke: #fff; stroke-width: 4.5; stroke-linejoin: round; }
.case { fill: none; stroke: #f4cb7c; stroke-width: 11; stroke-linejoin: round; stroke-linecap: round; }
.core { fill: none; stroke: #fde293; stroke-width: 6; stroke-linejoin: round; stroke-linecap: round; }
.case #hw { stroke: inherit; }
.map text { font-family: Roboto, sans-serif; font-size: 29px; }
.labels text { stroke: rgba(255,255,255,.7); stroke-width: 4px; paint-order: stroke; stroke-linejoin: round; }
.labels .m { text-anchor: middle; }
.labels .e { text-anchor: end; }
.gr { fill: #398257; }
.blue { fill: #4584e0; }
.teal { fill: #28909d; }
.gy { fill: #6c7887; }
.it, .is { font-style: italic; }
.is { fill: #424c59; }
.labels .ds { fill: #555c68; font-size: 24.5px; font-weight: 500; letter-spacing: 2.6px; }
.labels .sm { fill: #65707c; font-size: 18px; font-weight: 500; letter-spacing: 2px; }
.labels .rd { fill: #8a5947; font-size: 23.5px; }
.labels .rg { fill: #6a6d74; font-size: 21.5px; }
.labels .bw { fill: #3f70bc; font-size: 22.5px; stroke-width: 0; }
.map .tag { font-size: 17px; font-weight: bold; text-anchor: middle; fill: #665016; }
.price rect { fill: #fff; stroke: #70757c; stroke-width: 3.5; }
.map .price text { font-size: 26px; font-weight: 900; text-anchor: middle; fill: #111; }
```
